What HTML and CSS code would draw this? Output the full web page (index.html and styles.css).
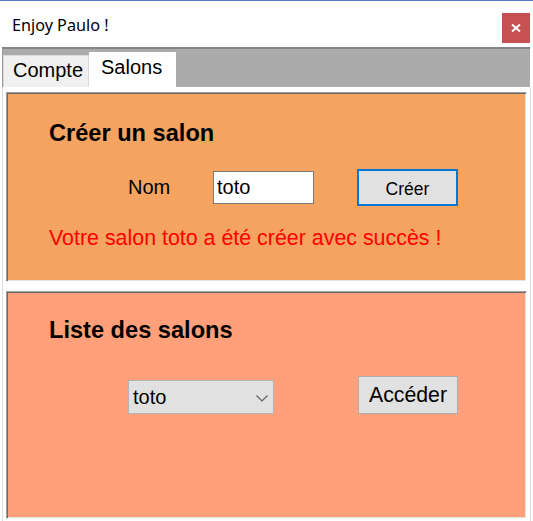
FILE: index.html
```html
<!DOCTYPE html>
<html lang="fr">
<head>
<meta charset="utf-8">
<title>Enjoy Paulo !</title>
<link rel="stylesheet" href="styles.css">
</head>
<body>
<div class="window">
  <header class="titlebar">
    <span class="title">Enjoy Paulo !</span>
    <div class="close" aria-label="Fermer">
      <svg width="10" height="8" viewBox="0 0 10 8"><path d="M1 0.5 L9 7.5 M9 0.5 L1 7.5" stroke="#fff" stroke-width="2" fill="none"/></svg>
    </div>
  </header>
  <div class="tabctl">
    <div class="tabstrip">
      <div class="tab">Compte</div>
      <div class="tab active">Salons</div>
    </div>
    <div class="page">
      <section class="panel create">
        <h2 class="heading">Créer un salon</h2>
        <div class="row form-row">
          <span class="label">Nom</span>
          <div class="textbox">toto</div>
          <div class="btn btn-primary">Créer</div>
        </div>
        <p class="msg">Votre salon toto a été créer avec succès !</p>
      </section>
      <section class="panel list">
        <h2 class="heading">Liste des salons</h2>
        <div class="row list-row">
          <div class="select">
            <span>toto</span>
            <svg class="chev" width="12" height="7" viewBox="0 0 12 7"><path d="M0.5 0.5 L6 6 L11.5 0.5" stroke="#606060" stroke-width="1.2" fill="none"/></svg>
          </div>
          <div class="btn btn-access">Accéder</div>
        </div>
      </section>
    </div>
  </div>
</div>
</body>
</html>
```
FILE: styles.css
```css
* { box-sizing: border-box; }
html, body { margin: 0; padding: 0; }
body {
  width: 533px;
  height: 521px;
  overflow: hidden;
  background: #fff;
  font-family: "Liberation Sans", Arial, sans-serif;
  color: #000;
}
.window {
  height: 521px;
  border-top: 1px solid #5b7cc0;
  display: flex;
  flex-direction: column;
}
.titlebar {
  height: 46px;
  flex: 0 0 46px;
  display: flex;
  align-items: flex-start;
  justify-content: space-between;
  padding: 0 3px 0 12px;
}
.title {
  font-family: "Noto Sans", sans-serif;
  font-size: 16.2px;
  line-height: 20px;
  margin-top: 14px;
  color: #000;
}
.close {
  width: 28px;
  height: 30px;
  margin-top: 12px;
  background: #c75050;
  display: flex;
  align-items: center;
  justify-content: center;
}
.tabctl {
  flex: 1;
  display: flex;
  flex-direction: column;
  margin: 0 2px 0 2px;
}
.tabstrip {
  height: 40px;
  flex: 0 0 40px;
  background: #ababab;
  border-top: 2px solid #858585;
  border-left: 1px solid #9a9a9a;
  display: flex;
  align-items: flex-end;
  margin-right: 1px;
}
.tab {
  height: 32px;
  width: 86px;
  background: #f0f0f0;
  border: 1px solid #d9d9d9;
  border-bottom: none;
  font-size: 20px;
  line-height: 23px;
  padding: 3px 0 0 9px;
  color: #000;
}
.tab.active {
  height: 35px;
  width: 87px;
  background: #fff;
  border-color: #fff;
  padding-left: 11px;
}
.page {
  flex: 1;
  background: #fff;
  border-left: 1px solid #dcdcdc;
  border-right: 1px solid #dcdcdc;
  padding: 5px 3px 2px 3px;
  display: flex;
  flex-direction: column;
  gap: 9px;
}
.panel {
  border: 1px solid;
  border-color: #a0a0a0 #ffffff #ffffff #a0a0a0;
  box-shadow: inset 1px 1px 0 #696969, inset -1px -1px 0 #e3e3e3;
  padding-left: 2px;
}
.create {
  height: 190px;
  background: #f4a460;
  padding-top: 27px;
}
.list {
  flex: 1;
  background: #ffa07a;
  padding-top: 25px;
}
.heading {
  margin: 0 0 0 40px;
  font-size: 23.6px;
  line-height: 26px;
  font-weight: bold;
}
.row {
  display: flex;
}
.form-row {
  align-items: center;
  margin-top: 23px;
}
.label {
  flex: 0 0 85px;
  margin-left: 119px;
  font-size: 20px;
  line-height: 23px;
}
.textbox {
  width: 101px;
  height: 33px;
  background: #fff;
  border: 1px solid #7a7a7a;
  font-size: 20px;
  line-height: 31px;
  padding-left: 3px;
}
.btn {
  background: #e1e1e1;
  display: flex;
  align-items: center;
  justify-content: center;
}
.btn-primary {
  width: 101px;
  height: 37px;
  margin-left: 43px;
  border: 2px solid #0078d7;
  font-size: 17.5px;
  padding-top: 3px;
}
.msg {
  margin: 20px 0 0 40px;
  color: #ff0000;
  font-size: 21.4px;
  line-height: 25px;
}
.list-row {
  align-items: flex-start;
  margin-top: 33px;
  margin-left: 119px;
}
.select {
  width: 146px;
  height: 34px;
  margin-top: 4px;
  background: #e1e1e1;
  border: 1px solid #b4b4b4;
  display: flex;
  align-items: center;
  justify-content: space-between;
  padding: 1px 5px 0 4px;
  font-size: 20px;
}
.chev { margin-top: 1px; }
.btn-access {
  width: 100px;
  height: 38px;
  margin-left: 84px;
  border: 1px solid #adadad;
  font-size: 21.3px;
}
```
